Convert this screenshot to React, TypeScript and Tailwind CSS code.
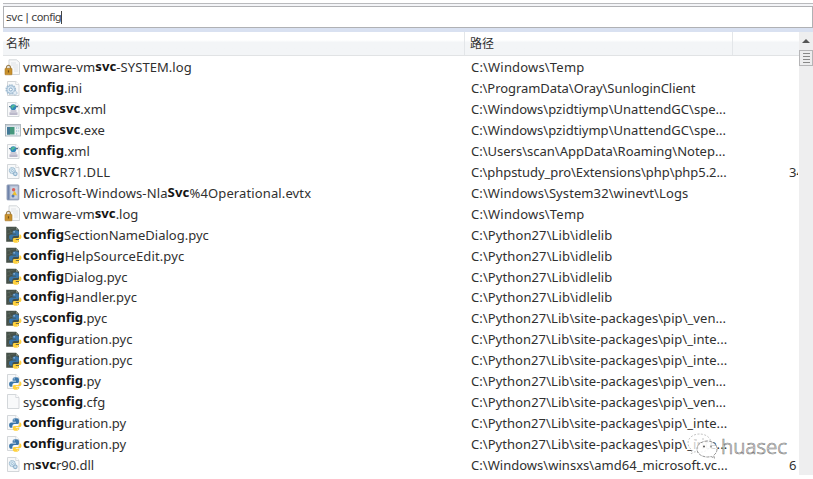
type IconKind = 'lock' | 'ini' | 'xml' | 'exe' | 'dll' | 'evtx' | 'pyc' | 'py' | 'blank';

interface Row {
  icon: IconKind;
  name: [string, string, string];
  path: string;
  size?: string;
  tracking?: string;
  pathTracking?: string;
}

const rows: Row[] = [
  { icon: 'lock', name: ['vmware-vm', 'svc', '-SYSTEM.log'], path: 'C:\\Windows\\Temp', tracking: 'tracking-[0.06px]', pathTracking: 'tracking-[0.18px]' },
  { icon: 'ini', name: ['', 'config', '.ini'], path: 'C:\\ProgramData\\Oray\\SunloginClient', pathTracking: 'tracking-[-0.06px]' },
  { icon: 'xml', name: ['vimpc', 'svc', '.xml'], path: 'C:\\Windows\\pzidtiymp\\UnattendGC\\spe...' },
  { icon: 'exe', name: ['vimpc', 'svc', '.exe'], path: 'C:\\Windows\\pzidtiymp\\UnattendGC\\spe...' },
  { icon: 'xml', name: ['', 'config', '.xml'], path: 'C:\\Users\\scan\\AppData\\Roaming\\Notep...', pathTracking: 'tracking-normal' },
  { icon: 'dll', name: ['M', 'SVC', 'R71.DLL'], path: 'C:\\phpstudy_pro\\Extensions\\php\\php5.2...', size: '34', tracking: 'tracking-[0.15px]', pathTracking: 'tracking-[-0.06px]' },
  { icon: 'evtx', name: ['Microsoft-Windows-Nla', 'Svc', '%4Operational.evtx'], path: 'C:\\Windows\\System32\\winevt\\Logs', tracking: 'tracking-[0.12px]', pathTracking: 'tracking-[0.09px]' },
  { icon: 'lock', name: ['vmware-vm', 'svc', '.log'], path: 'C:\\Windows\\Temp', pathTracking: 'tracking-[0.18px]' },
  { icon: 'pyc', name: ['', 'config', 'SectionNameDialog.pyc'], path: 'C:\\Python27\\Lib\\idlelib', pathTracking: 'tracking-[0.1px]' },
  { icon: 'pyc', name: ['', 'config', 'HelpSourceEdit.pyc'], path: 'C:\\Python27\\Lib\\idlelib', tracking: 'tracking-[0.12px]', pathTracking: 'tracking-[0.1px]' },
  { icon: 'pyc', name: ['', 'config', 'Dialog.pyc'], path: 'C:\\Python27\\Lib\\idlelib', pathTracking: 'tracking-[0.1px]' },
  { icon: 'pyc', name: ['', 'config', 'Handler.pyc'], path: 'C:\\Python27\\Lib\\idlelib', tracking: 'tracking-[0.12px]', pathTracking: 'tracking-[0.1px]' },
  { icon: 'pyc', name: ['sys', 'config', '.pyc'], path: 'C:\\Python27\\Lib\\site-packages\\pip\\_ven...', pathTracking: 'tracking-[0.06px]' },
  { icon: 'pyc', name: ['', 'config', 'uration.pyc'], path: 'C:\\Python27\\Lib\\site-packages\\pip\\_inte...', pathTracking: 'tracking-[0.05px]' },
  { icon: 'pyc', name: ['', 'config', 'uration.pyc'], path: 'C:\\Python27\\Lib\\site-packages\\pip\\_inte...', pathTracking: 'tracking-[0.05px]' },
  { icon: 'py', name: ['sys', 'config', '.py'], path: 'C:\\Python27\\Lib\\site-packages\\pip\\_ven...', pathTracking: 'tracking-[0.06px]' },
  { icon: 'blank', name: ['sys', 'config', '.cfg'], path: 'C:\\Python27\\Lib\\site-packages\\pip\\_ven...', pathTracking: 'tracking-[0.06px]' },
  { icon: 'py', name: ['', 'config', 'uration.py'], path: 'C:\\Python27\\Lib\\site-packages\\pip\\_inte...', pathTracking: 'tracking-[0.05px]' },
  { icon: 'py', name: ['', 'config', 'uration.py'], path: 'C:\\Python27\\Lib\\site-packages\\pip\\_inte...', pathTracking: 'tracking-[0.05px]' },
  { icon: 'dll', name: ['m', 'svc', 'r90.dll'], path: 'C:\\Windows\\winsxs\\amd64_microsoft.vc...', size: '6', tracking: 'tracking-[-0.05px]' },
];

function Page() {
  return (
    <>
      <path d="M2.500 1.500h8.300l3.200 3v11H2.500z" fill="#f8f9fa" stroke="#c9cdd1" strokeWidth=".8" />
      <path d="M10.800 1.500v3H14" fill="#fff" stroke="#c9cdd1" strokeWidth=".7" />
    </>
  );
}

function Python() {
  return (
    <g transform="translate(-1.300 -1.700) scale(1.130)">
      <path d="M10.500 5.300c-2 0-2.600.6-2.600 1.800v1.300h3v.6H6.700c-1.300 0-1.900 1-1.900 2.400s.7 2.300 1.800 2.300h1.100v-1.500c0-1.100.8-1.800 1.900-1.800h2.600c.8 0 1.300-.7 1.300-1.400V7.100c0-1.200-1-1.800-3-1.800z" fill="#3975a9" />
      <path d="M13.900 8.900v1.400c0 1.100-.9 1.800-1.900 1.800H9.500c-.9 0-1.400.6-1.400 1.400v1.200c0 1 1 1.600 2.700 1.600 1.800 0 2.700-.6 2.700-1.600v-1h-2.800v-.6h3.200c1.300 0 1.800-.9 1.800-2.100s-.6-2.100-1.800-2.100z" fill="#ffd13d" />
      <circle cx="9.200" cy="6.700" r=".5" fill="#fff" />
      <circle cx="12.200" cy="14.900" r=".4" fill="#fff" />
    </g>
  );
}

function FileIcon({ kind }: { kind: IconKind }) {
  return (
    <svg viewBox="0 0 16 17" className="h-[17px] w-4 shrink-0 overflow-visible">
      {kind === 'lock' && (
        <>
          <path d="M4 .8h7.500L14.500 3.500v12H4z" fill="#f8f9fa" stroke="#c9cdd1" strokeWidth=".8" />
          <path d="M6 4h5M6 6h7M8 8h5M9 10h4M9 12h4" stroke="#d8dde1" strokeWidth=".8" />
          <path d="M1.500 10V8.400c0-2.700 4-2.700 4 0V10" fill="none" stroke="#9d8457" strokeWidth="1.200" />
          <rect x="0" y="9.300" width="7" height="6.500" rx=".6" fill="#c9912c" stroke="#a67627" strokeWidth=".6" />
          <path d="M3.500 11.300v2.200" stroke="#765016" strokeWidth="1.200" />
        </>
      )}
      {kind !== 'lock' && kind !== 'exe' && kind !== 'pyc' && kind !== 'evtx' && <Page />}
      {kind === 'ini' && (
        <>
          <circle cx="5.800" cy="9.500" r="4.600" fill="#dce9f4" stroke="#a4bdd1" strokeWidth="1.500" strokeDasharray="1.600 .8" />
          <circle cx="5.800" cy="9.500" r="3.800" fill="#dceaf5" stroke="#9bb7cf" strokeWidth=".8" />
          <circle cx="5.800" cy="9.500" r="1.500" fill="#fff" stroke="#86aac8" />
          <circle cx="10" cy="13" r="2" fill="#e4edf5" stroke="#a4bdd1" strokeDasharray="1 .5" />
        </>
      )}
      {kind === 'xml' && (
        <>
          <circle cx="8.300" cy="6.200" r="2.900" fill="#2f86ba" />
          <path d="M6.200 4.700l3-1 1.300 1.500-2 .7-.8 2-1.300-1.400z" fill="#52ba96" />
          <path d="M4 5.700h1.700M11 5.700h2" stroke="#345978" />
          <path d="M5.500 10h6M4.500 12h8M4.500 13.200h8" stroke="#9590ad" strokeWidth=".9" />
        </>
      )}
      {kind === 'exe' && (
        <>
          <rect x=".4" y="2.500" width="15.200" height="11.500" fill="#edf2f5" stroke="#9faab1" strokeWidth=".8" />
          <path d="M1 3h14v1.500H1z" fill="#c6d1da" />
          <path d="M2 5h7.500v7.500H2z" fill="#44977c" />
          <path d="M2 5h3v7.500H2z" fill="#437997" />
          <path d="M11 6h1.200M13.200 6h1M11 9h1.200M13.200 9h1M11 12h1.200" stroke="#83b4c4" />
        </>
      )}
      {kind === 'dll' && (
        <>
          <circle cx="7.300" cy="7.600" r="2.900" fill="#dcebf5" stroke="#a2bfd3" strokeWidth="1.300" strokeDasharray="1.500 .4" />
          <circle cx="7.300" cy="7.600" r="1" fill="#fff" stroke="#83acc9" strokeWidth=".7" />
          <circle cx="10.300" cy="10.800" r="1.800" fill="#d0e2ef" stroke="#8eb1cb" strokeWidth="1.100" />
        </>
      )}
      {kind === 'evtx' && (
        <>
          <rect x="2" y=".9" width="11.800" height="15" rx=".7" fill="#a9b7ce" stroke="#8491ab" strokeWidth=".8" />
          <path d="M2.500 1.300h2v14.300h-2z" fill="#6f83aa" />
          <path d="M5.500 2.500h7v12h-7z" fill="#c8d1e2" />
          <circle cx="8.600" cy="5.700" r="1.700" fill="#d65f5b" />
          <path d="M9.600 6.800l2.500 4.400H7z" fill="#edc02f" />
          <circle cx="8" cy="12" r="1.500" fill="#5579b3" />
        </>
      )}
      {kind === 'pyc' && (
        <>
          <path d="M1.200.8h9.800l3 2.900v12H1.200z" fill="#465149" />
          <path d="M2 4l8-2.500M2 8l6-2M3 14l3-4M4 2l2 5" stroke="#5e6a61" strokeWidth=".6" />
          <path d="M11 .8v2.900h3" fill="#7f8a82" />
          <Python />
        </>
      )}
      {kind === 'py' && <Python />}
    </svg>
  );
}

function WeChatMark() {
  return (
    <svg viewBox="0 0 34 28" className="h-7 w-[34px] shrink-0">
      <path d="M13.500 2C7 2 2 6 2 11c0 3 1.600 5.300 4 7l-1 3.700 4-2c1.400.4 3 .6 4.500.6C20 20.300 25 16.300 25 11S20 2 13.500 2z" fill="#fff" fillOpacity=".75" stroke="#aaa" strokeWidth=".7" strokeDasharray="2 1.500" />
      <path d="M21.500 9C15.500 9 11 12.600 11 17s4.500 8 10.500 8c1.300 0 2.500-.2 3.600-.5l3.300 1.700-.8-2.900C30 21.700 31 19.500 31 17c0-4.400-4-8-9.500-8z" fill="#fff" fillOpacity=".8" stroke="#777" strokeWidth=".8" strokeDasharray="3 1" />
      <circle cx="18" cy="14.500" r="1" fill="#555" />
      <circle cx="25" cy="14.500" r="1" fill="#999" />
      <circle cx="10" cy="8" r=".8" fill="#bbb" />
      <circle cx="17" cy="7" r=".8" fill="#bbb" />
    </svg>
  );
}

export default function App() {
  return (
    <div className="relative flex h-[479px] w-[813px] flex-col overflow-hidden bg-white pl-[3px] pt-[3px] font-['Noto_Sans','Noto_Sans_CJK_SC',sans-serif] text-[13px] text-[#303030]">
      <div className="h-[3px] shrink-0 border-t border-[#b9babd] bg-[#f3f4f7]" />
      <div className="flex h-[22px] shrink-0 items-center border border-[#b0b1b4] bg-white pl-[2px] font-['DejaVu_Sans',sans-serif] text-[11px] tracking-[-0.62px] text-[#444]">
        <span className="whitespace-pre pt-[2px]">svc | config</span>
        <span className="h-[13px] w-px bg-[#444]" />
      </div>
      <div className="h-1 shrink-0 bg-[#d9e1f1]" />
      <div className="flex h-[443px] shrink-0">
        <main className="flex w-[796px] flex-col overflow-hidden">
          <div className="mb-px flex h-6 shrink-0 items-center border-b border-[#e1e3e5] bg-linear-to-b from-white from-35% to-[#f3f5f7] to-45% text-[12px]">
            <div className="flex h-full w-[462px] items-center border-r border-[#e3e6e9] pl-[3px]">名称</div>
            <div className="flex h-full w-[268px] items-center border-r border-[#e3e6e9] pl-[5px]">路径</div>
          </div>
          {rows.map((row, index) => (
            <div key={index} className="flex h-[20.92px] shrink-0 items-center whitespace-pre leading-5">
              <div className="flex w-[468px] shrink-0 items-center pl-[2px]">
                <FileIcon kind={row.icon} />
                <span className={`ml-[2px] ${row.tracking ?? ''}`}>
                  {row.name[0]}
                  <b className="relative -top-px text-[13.2px] font-bold text-[#151515]">{row.name[1]}</b>
                  {row.name[2]}
                </span>
              </div>
              <span className={`w-[318px] shrink-0 ${row.pathTracking ?? 'tracking-[0.03px]'}`}>{row.path}</span>
              <span className="w-[9px] shrink-0 overflow-hidden">{row.size}</span>
            </div>
          ))}
        </main>
        <aside className="flex w-[14px] flex-col items-center bg-[#eeeeef]">
          <div className="flex h-[18px] items-center justify-center">
            <span className="border-x-4 border-b-4 border-x-transparent border-b-[#555]" />
          </div>
          <div className="flex h-4 w-[14px] flex-col items-center justify-center gap-[2px] border border-[#b5b5b7] bg-[#ededee]">
            <span className="h-px w-[7px] bg-[#888]" />
            <span className="h-px w-[7px] bg-[#888]" />
            <span className="h-px w-[7px] bg-[#888]" />
            <span className="h-px w-[7px] bg-[#888]" />
          </div>
        </aside>
      </div>
      <div className="absolute left-[686px] top-[432px] flex items-center">
        <WeChatMark />
        <span className="ml-[1px] text-[20.5px] font-light leading-7 text-white [-webkit-text-stroke:0.6px_#777]">huasec</span>
      </div>
    </div>
  );
}
